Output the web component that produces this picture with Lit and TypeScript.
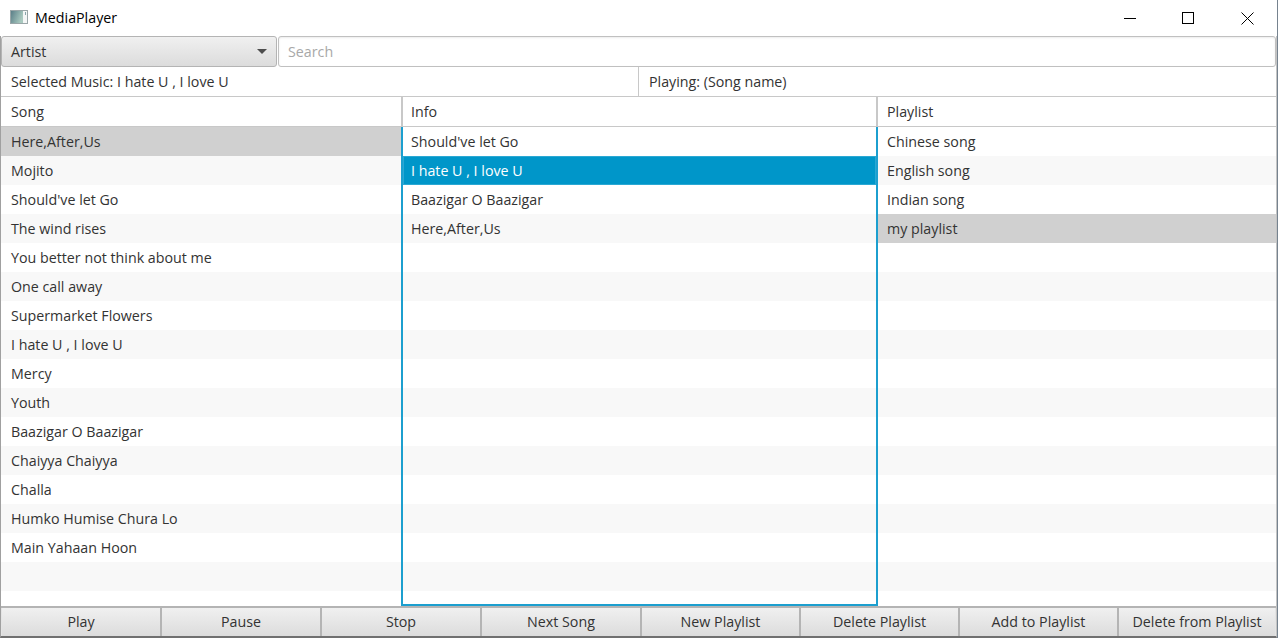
import { LitElement, html, css } from 'lit';
import { customElement } from 'lit/decorators.js';

const SONGS = [
  "Here,After,Us", "Mojito", "Should've let Go", "The wind rises",
  "You better not think about me", "One call away", "Supermarket Flowers",
  "I hate U , I love U", "Mercy", "Youth", "Baazigar O Baazigar",
  "Chaiyya Chaiyya", "Challa", "Humko Humise Chura Lo", "Main Yahaan Hoon", "",
];
const INFO = ["Should've let Go", "I hate U , I love U", "Baazigar O Baazigar", "Here,After,Us"];
const PLAYLISTS = ["Chinese song", "English song", "Indian song", "my playlist"];
const BUTTONS = ["Play", "Pause", "Stop", "Next Song", "New Playlist", "Delete Playlist", "Add to Playlist", "Delete from Playlist"];
const ROWS = 16;

@customElement('app-root')
export class AppRoot extends LitElement {
  static styles = css`
    :host {
      display: flex;
      flex-direction: column;
      width: 1278px;
      height: 638px;
      overflow: hidden;
      background: #fff;
      box-sizing: border-box;
      border-right: 1px solid #76838f;
      font-family: "Open Sans", "Noto Sans", sans-serif;
      font-size: 14.25px;
      color: #333;
    }
    .titlebar {
      height: 36px;
      flex: none;
      display: flex;
      align-items: center;
      padding-left: 10px;
      color: #000;
    }
    .app-icon { margin: 0 7px 2px 0; display: block; }
    .title { flex: 1; padding-bottom: 1px; }
    .winbtn {
      width: 58px;
      height: 36px;
      display: flex;
      align-items: center;
      justify-content: center;
    }
    .winbtn.close { width: 60px; }
    .content {
      flex: 1;
      display: flex;
      flex-direction: column;
      min-height: 0;
      border-left: 1px solid #a0a0a0;
      border-right: 1px solid #c4c4c4;
      border-bottom: 2px solid #707070;
    }
    .search-row {
      height: 31px;
      flex: none;
      display: flex;
      gap: 1px;
    }
    .combo {
      width: 276px;
      box-sizing: border-box;
      display: flex;
      align-items: center;
      padding: 0 9px 0 9px;
      background: linear-gradient(#f0f0f0, #dcdcdc);
      border: 1px solid #b4b4b4;
      border-radius: 3px;
    }
    .combo span { flex: 1; }
    .arrow {
      width: 0;
      height: 0;
      border-left: 5px solid transparent;
      border-right: 5px solid transparent;
      border-top: 5px solid #4d4d4d;
    }
    .search {
      flex: 1;
      box-sizing: border-box;
      display: flex;
      align-items: center;
      padding-left: 9px;
      color: #a8a8a8;
      border: 1px solid #c0c0c0;
      border-radius: 3px;
      box-shadow: inset 0 1px 2px #ececec;
    }
    .status-row {
      height: 30px;
      flex: none;
      display: grid;
      grid-template-columns: 637px 1fr;
      box-sizing: border-box;
      border-bottom: 1px solid #c8c8c8;
    }
    .status {
      display: flex;
      align-items: center;
      padding-left: 10px;
    }
    .status + .status { border-left: 1px solid #c8c8c8; }
    .columns {
      flex: 1;
      min-height: 0;
      display: grid;
      grid-template-columns: 400px 477px 1fr;
    }
    .col {
      display: flex;
      flex-direction: column;
      min-width: 0;
      overflow: hidden;
    }
    .col.focused .list {
      border-left: 2px solid #1c9fcf;
      border-right: 2px solid #1c9fcf;
      border-bottom: 2px solid #1c9fcf;
    }
    .col.focused .head {
      border-left: 2px solid #c8c8c8;
      border-right: 2px solid #c8c8c8;
      padding-left: 8px;
    }
    .col.focused .row { padding-left: 8px; }
    .col.last .head, .col.last .row { padding-left: 9px; }
    .head {
      height: 30px;
      flex: none;
      box-sizing: border-box;
      display: flex;
      align-items: center;
      padding-left: 10px;
      border-bottom: 1px solid #c8c8c8;
    }
    .list { flex: 1; min-height: 0; box-sizing: border-box; }
    .row {
      height: 29px;
      box-sizing: border-box;
      display: flex;
      align-items: center;
      padding-left: 10px;
      background: #fff;
    }
    .row.odd { background: #f8f8f8; }
    .row.grey { background: #d0d0d0; }
    .row.sel {
      background: #0096c9;
      color: #fff;
      box-shadow: inset 0 0 0 1px #2ba8d3;
    }
    .buttons {
      height: 30px;
      flex: none;
      display: grid;
      grid-template-columns: repeat(4, 160px) repeat(3, 159px) 1fr;
      box-sizing: border-box;
      border-top: 2px solid #b4b4b4;
    }
    .btn {
      display: flex;
      align-items: center;
      justify-content: center;
      padding-bottom: 2px;
      background: linear-gradient(#f0f0f0, #dcdcdc);
      border-left: 1px solid #b4b4b4;
      border-right: 1px solid #b4b4b4;
      box-sizing: border-box;
    }
    .btn:first-child { border-left-color: #e4e4e4; }
    .btn:last-child { border-right-color: #e4e4e4; }
  `;

  renderRows(items: string[], grey: number, sel = -1) {
    return Array.from({ length: ROWS }, (_, i) => {
      const cls = ['row', i % 2 ? 'odd' : '', i === grey ? 'grey' : '', i === sel ? 'sel' : ''].join(' ');
      return html`<div class=${cls}>${items[i] ?? ''}</div>`;
    });
  }

  render() {
    return html`
      <div class="titlebar">
        <svg class="app-icon" width="18" height="14" viewBox="0 0 18 14">
          <defs>
            <linearGradient id="ic" x1="0" x2="1" y1="0" y2="0.4">
              <stop offset="0" stop-color="#5b7f88"/>
              <stop offset="1" stop-color="#a9c9bf"/>
            </linearGradient>
          </defs>
          <rect x="0.5" y="0.5" width="17" height="13" fill="#f4f6f6" stroke="#9aa6a8"/>
          <rect x="1" y="1" width="12" height="12" fill="url(#ic)"/>
          <rect x="15" y="2" width="1" height="3" fill="#8aa7ab"/>
        </svg>
        <div class="title">MediaPlayer</div>
        <div class="winbtn">
          <svg width="12" height="12" viewBox="0 0 12 12"><path d="M0 6.5H12" stroke="#000" fill="none"/></svg>
        </div>
        <div class="winbtn">
          <svg width="12" height="12" viewBox="0 0 12 12"><rect x="0.5" y="0.5" width="11" height="11" stroke="#000" fill="none"/></svg>
        </div>
        <div class="winbtn close">
          <svg width="13" height="13" viewBox="0 0 13 13"><path d="M0.5 0.5L12.5 12.5M12.5 0.5L0.5 12.5" stroke="#000" fill="none"/></svg>
        </div>
      </div>
      <div class="content">
        <div class="search-row">
          <div class="combo"><span>Artist</span><div class="arrow"></div></div>
          <div class="search">Search</div>
        </div>
        <div class="status-row">
          <div class="status">Selected Music: I hate U , I love U</div>
          <div class="status">Playing: (Song name)</div>
        </div>
        <div class="columns">
          <div class="col">
            <div class="head">Song</div>
            <div class="list">${this.renderRows(SONGS, 0)}</div>
          </div>
          <div class="col focused">
            <div class="head">Info</div>
            <div class="list">${this.renderRows(INFO, -1, 1)}</div>
          </div>
          <div class="col last">
            <div class="head">Playlist</div>
            <div class="list">${this.renderRows(PLAYLISTS, 3)}</div>
          </div>
        </div>
        <div class="buttons">
          ${BUTTONS.map((b) => html`<div class="btn">${b}</div>`)}
        </div>
      </div>
    `;
  }
}
